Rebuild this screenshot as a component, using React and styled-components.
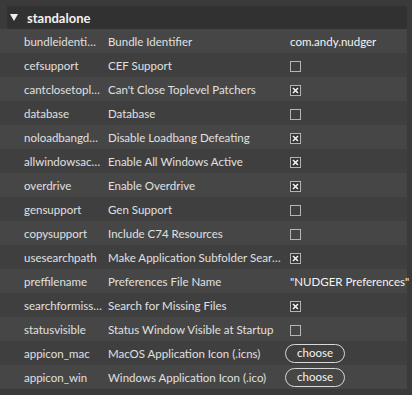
import React from "react";
import styled, { createGlobalStyle } from "styled-components";

const GlobalStyle = createGlobalStyle`
  html, body {
    margin: 0;
    padding: 0;
    background: #3a3a3a;
  }
  body {
    font-family: Lato, "Open Sans", sans-serif;
    -webkit-font-smoothing: antialiased;
  }
`;

const Panel = styled.div`
  width: 412px;
  height: 395px;
  box-sizing: border-box;
  padding: 6px 5px 0 0;
  background: #3a3a3a;
  overflow: hidden;
`;

const Header = styled.div`
  display: flex;
  align-items: center;
  gap: 9px;
  height: 23px;
  margin-left: 7px;
  padding-left: 3px;
  background: #313131;
  color: #f2f2f2;
  font-size: 13px;
  font-weight: 700;
`;

const Triangle = styled.span`
  width: 0;
  height: 0;
  border-left: 4px solid transparent;
  border-right: 4px solid transparent;
  border-top: 7px solid #f0f0f0;
`;

const Row = styled.div`
  display: grid;
  grid-template-columns: 78px 175px 1fr;
  column-gap: 6px;
  align-items: center;
  height: 24px;
  padding-left: 24px;
  background: ${(p) => (p.$odd ? "#3f3f3f" : "#464646")};
  font-size: 11.5px;
  color: #e0e0e0;
`;

const Cell = styled.span`
  white-space: nowrap;
  overflow: hidden;
  text-overflow: ellipsis;
`;

const ValueCell = styled.div`
  margin-left: 1px;
`;

const Value = styled.span`
  color: #f4f4f4;
  white-space: nowrap;
`;

const Box = styled.span`
  display: inline-flex;
  align-items: center;
  justify-content: center;
  width: 9px;
  height: 9px;
  border: 1px solid #b4b4b4;
  background: ${(p) => (p.$on ? "#353535" : "transparent")};
  vertical-align: middle;
`;

const ChooseButton = styled.button`
  box-sizing: border-box;
  width: 60px;
  height: 19px;
  margin-left: -5px;
  padding: 0;
  border: 1px solid #d8d8d8;
  border-radius: 10px;
  background: transparent;
  color: #f4f4f4;
  font-family: Lato, sans-serif;
  font-size: 11.5px;
  line-height: 16px;
`;

const Check = ({ on }) => (
  <Box $on={on}>
    {on && (
      <svg width="7" height="7" viewBox="0 0 7 7">
        <path d="M1 1 L6 6 M6 1 L1 6" stroke="#f4f4f4" strokeWidth="1.6" />
      </svg>
    )}
  </Box>
);

const rows = [
  ["bundleidentifier", "Bundle Identifier", { text: "com.andy.nudger" }],
  ["cefsupport", "CEF Support", { check: false }],
  ["cantclosetoplevelpatchers", "Can't Close Toplevel Patchers", { check: true }],
  ["database", "Database", { check: false }],
  ["noloadbangdefeating", "Disable Loadbang Defeating", { check: true }],
  ["allwindowsactive", "Enable All Windows Active", { check: true }],
  ["overdrive", "Enable Overdrive", { check: true }],
  ["gensupport", "Gen Support", { check: false }],
  ["copysupport", "Include C74 Resources", { check: false }],
  ["usesearchpath", "Make Application Subfolder Search Path", { check: true }],
  ["preffilename", "Preferences File Name", { text: "\"NUDGER Preferences\"" }],
  ["searchformissingfiles", "Search for Missing Files", { check: true }],
  ["statusvisible", "Status Window Visible at Startup", { check: false }],
  ["appicon_mac", "MacOS Application Icon (.icns)", { button: true }],
  ["appicon_win", "Windows Application Icon (.ico)", { button: true }],
];

const renderValue = (v) => {
  if (v.button) return <ChooseButton>choose</ChooseButton>;
  if (v.text) return <Value>{v.text}</Value>;
  return <Check on={v.check} />;
};

export default function App() {
  return (
    <>
      <GlobalStyle />
      <Panel>
        <Header>
          <Triangle />
          standalone
        </Header>
        {rows.map(([name, label, value], i) => (
          <Row key={name} $odd={i % 2 === 1}>
            <Cell>{name}</Cell>
            <Cell>{label}</Cell>
            <ValueCell>{renderValue(value)}</ValueCell>
          </Row>
        ))}
      </Panel>
    </>
  );
}
